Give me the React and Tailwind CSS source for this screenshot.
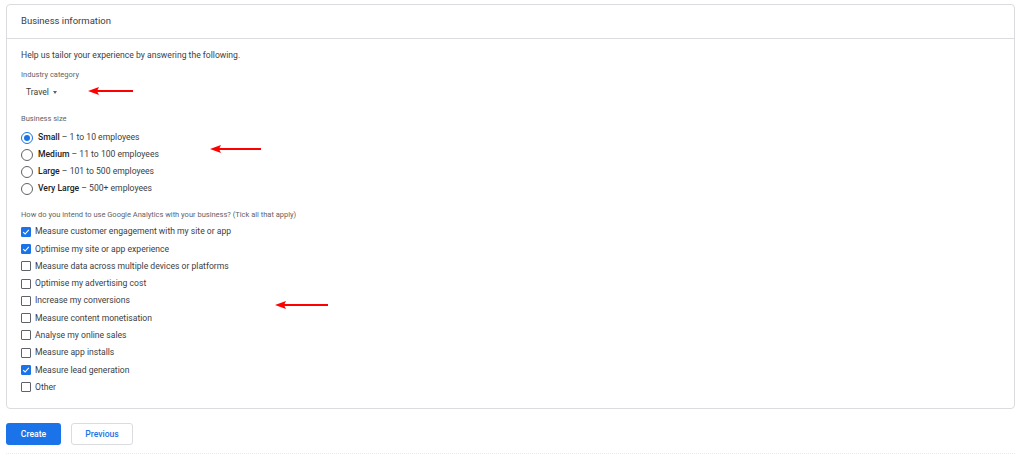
import { useState } from 'react';

const sizes = [
  { id: 'small', name: 'Small', range: '1 to 10 employees' },
  { id: 'medium', name: 'Medium', range: '11 to 100 employees' },
  { id: 'large', name: 'Large', range: '101 to 500 employees' },
  { id: 'xl', name: 'Very Large', range: '500+ employees' },
];

const uses = [
  { label: 'Measure customer engagement with my site or app', on: true },
  { label: 'Optimise my site or app experience', on: true },
  { label: 'Measure data across multiple devices or platforms', on: false },
  { label: 'Optimise my advertising cost', on: false },
  { label: 'Increase my conversions', on: false },
  { label: 'Measure content monetisation', on: false },
  { label: 'Analyse my online sales', on: false },
  { label: 'Measure app installs', on: false },
  { label: 'Measure lead generation', on: true },
  { label: 'Other', on: false },
];

// red annotation arrows pointing left
const Arrow = ({ className, w }) => (
  <svg className={`absolute ${className}`} width={w} height="10" viewBox={`0 0 ${w} 10`}>
    <line x1="8" y1="5" x2={w} y2="5" stroke="#f00" strokeWidth="2" />
    <polygon points="0,5 11,1 9,5 11,9" fill="#f00" />
  </svg>
);

const Radio = ({ checked }) => (
  <span
    className={`flex h-[12px] w-[12px] items-center justify-center rounded-full border ${
      checked ? 'border-[#1a73e8]' : 'border-[#5f6368]'
    }`}
  >
    {checked && <span className="h-[6px] w-[6px] rounded-full bg-[#1a73e8]" />}
  </span>
);

const Checkbox = ({ checked }) => (
  <span
    className={`flex h-[10px] w-[10px] items-center justify-center rounded-[1px] border ${
      checked ? 'border-[#1a73e8] bg-[#1a73e8]' : 'border-[#5f6368] bg-white'
    }`}
  >
    {checked && (
      <svg width="8" height="8" viewBox="0 0 8 8">
        <path d="M1.2 4.2 L3.1 6 L6.8 1.9" fill="none" stroke="#fff" strokeWidth="1.1" />
      </svg>
    )}
  </span>
);

const App = () => {
  const [size, setSize] = useState('small');
  const [checks, setChecks] = useState(uses.map((u) => u.on));

  const toggle = (i) => {
    const next = [...checks];
    next[i] = !next[i];
    setChecks(next);
  };

  return (
    <div className="relative h-[456px] w-[1024px] bg-white font-['Roboto',sans-serif] text-[#3c4043]">
      <div className="pl-[6px] pr-[9px] pt-[4px]">
        <div className="rounded-[4px] border border-[#dadce0]">
          <div className="flex h-[34px] items-center border-b border-[#dadce0] px-[14px] text-[9.5px] text-[#3c4043]">
            Business information
          </div>
          <div className="px-[14px] pb-[12px] pt-[10px]">
            <p className="text-[8.6px] leading-[12px]">Help us tailor your experience by answering the following.</p>

            <p className="mt-[9px] text-[7.5px] leading-[10px] text-[#5f6368]">Industry category</p>
            <button className="ml-[5px] mt-[6px] flex items-center gap-[4px] text-[8.6px] leading-[12px]">
              Travel
              <span className="h-0 w-0 border-x-[2.5px] border-t-[3px] border-x-transparent border-t-[#5f6368]" />
            </button>

            <p className="mt-[16px] text-[7.5px] leading-[10px] text-[#5f6368]">Business size</p>
            <div className="mt-[5px] flex flex-col">
              {sizes.map((s) => (
                <label
                  key={s.id}
                  className="flex h-[17px] cursor-pointer items-center gap-[5px] text-[8.6px]"
                  onClick={() => setSize(s.id)}
                >
                  <Radio checked={size === s.id} />
                  <span>
                    <span className="font-medium text-[#202124]">{s.name}</span> – {s.range}
                  </span>
                </label>
              ))}
            </div>

            <p className="mt-[13px] text-[7.5px] leading-[10px] text-[#5f6368]">
              How do you intend to use Google Analytics with your business? (Tick all that apply)
            </p>
            <div className="mt-[3px] flex flex-col">
              {uses.map((u, i) => (
                <label
                  key={u.label}
                  className="flex h-[17.3px] cursor-pointer items-center gap-[4px] text-[8.6px]"
                  onClick={() => toggle(i)}
                >
                  <Checkbox checked={checks[i]} />
                  <span>{u.label}</span>
                </label>
              ))}
            </div>
          </div>
        </div>

        <div className="mt-[14px] flex gap-[10px]">
          <button className="h-[22px] w-[55px] rounded-[3px] bg-[#1a73e8] text-[8.6px] font-medium text-white">
            Create
          </button>
          <button className="h-[22px] w-[62px] rounded-[3px] border border-[#dadce0] bg-white text-[8.6px] font-medium text-[#1a73e8]">
            Previous
          </button>
        </div>
        <div className="mt-[8px] border-t border-dotted border-[#e8eaed]" />
      </div>

      <Arrow className="left-[88px] top-[86px]" w={45} />
      <Arrow className="left-[210px] top-[144px]" w={51} />
      <Arrow className="left-[275px] top-[300px]" w={53} />
    </div>
  );
};

export default App;
